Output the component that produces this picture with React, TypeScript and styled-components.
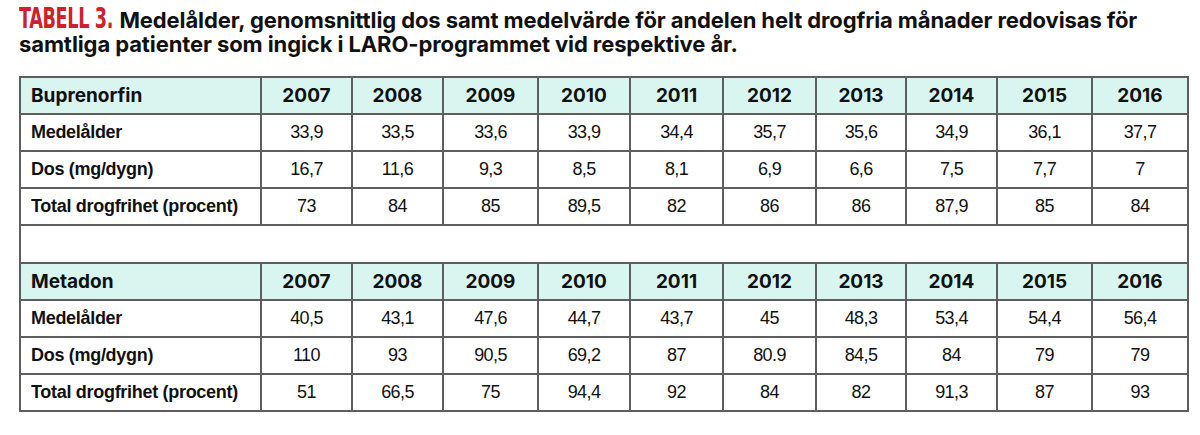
import React from "react";
import styled, { createGlobalStyle } from "styled-components";

const Global = createGlobalStyle`
  html, body { margin: 0; padding: 0; background: #ffffff; }
  body { width: 1200px; height: 435px; overflow: hidden; }
`;

const Page = styled.div`
  padding: 8px 12px 0 19px;
  box-sizing: border-box;
  width: 1200px;
`;

const Caption = styled.h1`
  margin: 0 0 20px 0;
  font-family: Inter, "Liberation Sans", sans-serif;
  font-weight: 700;
  font-size: 22px;
  line-height: 24px;
  height: 48px;
  color: #111;
  letter-spacing: -0.1px;
`;

const Label = styled.span`
  display: inline-block;
  font-family: "DejaVu Sans Condensed", "DejaVu Sans", sans-serif;
  font-stretch: condensed;
  font-weight: 700;
  font-size: 28px;
  line-height: 20px;
  color: #d0202a;
  letter-spacing: -0.5px;
  transform: scaleX(0.7);
  transform-origin: left center;
  margin-right: -34px;
  white-space: nowrap;
`;

const Table = styled.table`
  border-collapse: collapse;
  table-layout: fixed;
  width: 1168px;
`;

const Row = styled.tr<{ $head?: boolean }>`
  height: 37px;
  background: ${(p) => (p.$head ? "#d9f5f0" : "#ffffff")};
`;

const Cell = styled.td<{ $head?: boolean; $first?: boolean }>`
  border: 2px solid #5e5e5e;
  padding: 0 ${(p) => (p.$first ? "10px" : "4px")};
  text-align: ${(p) => (p.$first ? "left" : "center")};
  vertical-align: middle;
  color: #111;
  white-space: nowrap;
  font-family: ${(p) =>
    p.$head ? 'Inter, "Liberation Sans", sans-serif' : '"Liberation Sans", Arial, sans-serif'};
  font-weight: ${(p) => (p.$head || p.$first ? 700 : 400)};
  font-size: ${(p) => (p.$head ? "19px" : "18px")};
  letter-spacing: ${(p) => (p.$head ? "0px" : p.$first ? "-0.3px" : "-0.6px")};
`;

const Spacer = styled.td`
  height: 34px;
  border: 2px solid #5e5e5e;
  background: #fff;
`;

const years = ["2007", "2008", "2009", "2010", "2011", "2012", "2013", "2014", "2015", "2016"];
const widths = [241, 91, 91, 95, 92, 93, 93, 90, 91, 95, 96];

type Block = { name: string; rows: [string, string[]][] };

const blocks: Block[] = [
  {
    name: "Buprenorfin",
    rows: [
      ["Medelålder", ["33,9", "33,5", "33,6", "33,9", "34,4", "35,7", "35,6", "34,9", "36,1", "37,7"]],
      ["Dos (mg/dygn)", ["16,7", "11,6", "9,3", "8,5", "8,1", "6,9", "6,6", "7,5", "7,7", "7"]],
      ["Total drogfrihet (procent)", ["73", "84", "85", "89,5", "82", "86", "86", "87,9", "85", "84"]],
    ],
  },
  {
    name: "Metadon",
    rows: [
      ["Medelålder", ["40,5", "43,1", "47,6", "44,7", "43,7", "45", "48,3", "53,4", "54,4", "56,4"]],
      ["Dos (mg/dygn)", ["110", "93", "90,5", "69,2", "87", "80.9", "84,5", "84", "79", "79"]],
      ["Total drogfrihet (procent)", ["51", "66,5", "75", "94,4", "92", "84", "82", "91,3", "87", "93"]],
    ],
  },
];

const BlockRows: React.FC<{ block: Block }> = ({ block }) => (
  <>
    <Row $head>
      <Cell $head $first>{block.name}</Cell>
      {years.map((y) => (
        <Cell $head key={y}>{y}</Cell>
      ))}
    </Row>
    {block.rows.map(([label, vals]) => (
      <Row key={label}>
        <Cell $first>{label}</Cell>
        {vals.map((v, i) => (
          <Cell key={i}>{v}</Cell>
        ))}
      </Row>
    ))}
  </>
);

export default function App() {
  return (
    <>
      <Global />
      <Page>
        <Caption>
          <Label>TABELL 3.</Label>
          Medelålder, genomsnittlig dos samt medelvärde för andelen helt drogfria månader redovisas för samtliga patienter som ingick i LARO-programmet vid respektive år.
        </Caption>
        <Table>
          <colgroup>
            {widths.map((w, i) => (
              <col key={i} style={{ width: w }} />
            ))}
          </colgroup>
          <tbody>
            <BlockRows block={blocks[0]} />
            <tr>
              <Spacer colSpan={11} />
            </tr>
            <BlockRows block={blocks[1]} />
          </tbody>
        </Table>
      </Page>
    </>
  );
}
